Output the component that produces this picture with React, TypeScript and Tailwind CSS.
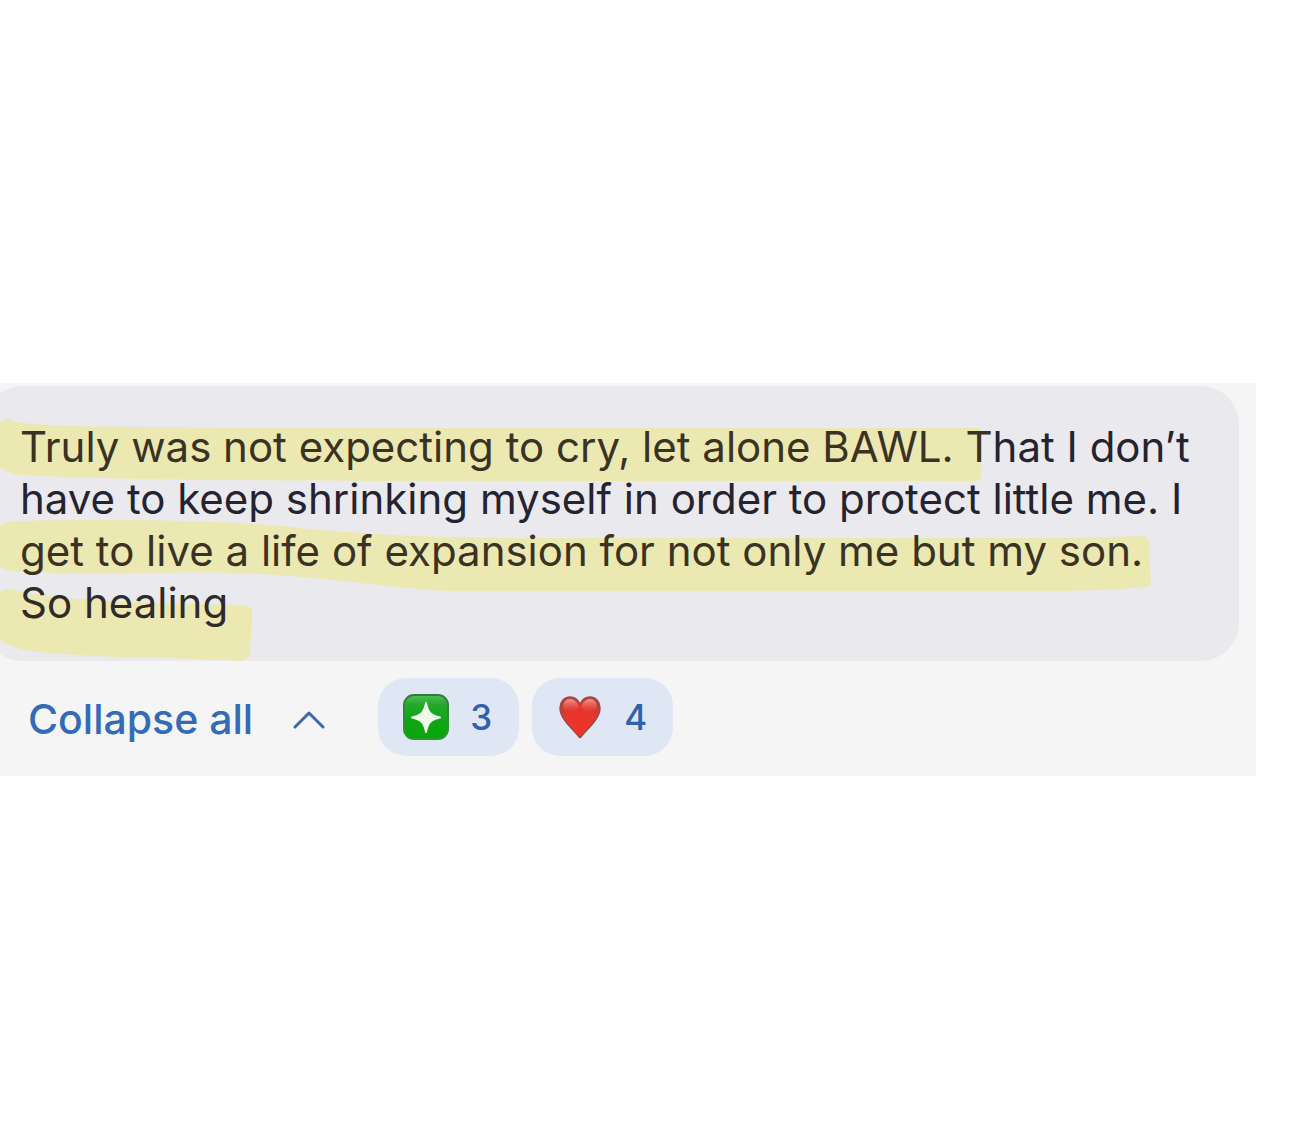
import { useState, type ReactNode } from "react";

function Highlights() {
  return (
    <svg
      className="pointer-events-none absolute left-0 top-0"
      width="1256"
      height="278"
      viewBox="0 0 1256 278"
      fill="#ece8b2"
      aria-hidden="true"
    >
      <path d="M0 37 Q6 30 16 36 C60 42 130 40 230 42 L700 42 L978 42 Q982 42 982 48 L981 91 Q981 95 975 95 L380 95 C240 94 110 94 20 89 Q6 87 0 81 Z" />
      <path d="M0 140 Q5 135 20 135 C110 133 230 134 300 142 C390 151 470 152 560 152 L1010 152 Q1090 152 1142 150 Q1148 150 1149 157 L1151 196 Q1151 201 1144 201 Q1105 205 1050 205 L450 205 C390 203 330 190 235 187 C170 185 70 190 10 185 Q3 184 0 180 Z" />
      <path d="M0 206 Q5 202 14 204 C60 215 140 216 190 218 L244 219 Q252 219 252 228 L250 268 Q249 275 240 275 C190 271 80 273 25 264 Q6 260 0 253 Z" />
    </svg>
  );
}

function StarEmoji() {
  return (
    <svg width="48" height="48" viewBox="0 0 48 48" aria-hidden="true">
      <defs>
        <linearGradient id="star-tile" x1="0" y1="0" x2="0" y2="1">
          <stop offset="0" stopColor="#4cc052" />
          <stop offset="0.22" stopColor="#25a82b" />
          <stop offset="0.6" stopColor="#0fa512" />
          <stop offset="1" stopColor="#08a50a" />
        </linearGradient>
        <linearGradient id="star-edge" x1="0" y1="0" x2="0" y2="1">
          <stop offset="0" stopColor="#357c3a" />
          <stop offset="1" stopColor="#2a9a2d" />
        </linearGradient>
      </defs>
      <rect x="2" y="2" width="44" height="44" rx="10" fill="url(#star-tile)" stroke="url(#star-edge)" strokeWidth="2" />
      <path d="M24 10 C25.5 19 28.500 22.500 38 24.500 C28.500 26.500 25.500 30 24 39 C22.500 30 19.500 26.500 10 24.500 C19.500 22.500 22.500 19 24 10Z" fill="#eefbea" stroke="#eefbea" strokeWidth="2" strokeLinejoin="round" />
    </svg>
  );
}

function HeartEmoji() {
  return (
    <svg width="48" height="48" viewBox="0 0 48 48" aria-hidden="true">
      <defs>
        <radialGradient id="heart-fill" cx="0.5" cy="0.62" r="0.65">
          <stop offset="0" stopColor="#ee3327" />
          <stop offset="0.55" stopColor="#e6362d" />
          <stop offset="1" stopColor="#bd3f3c" />
        </radialGradient>
        <linearGradient id="heart-shine" x1="0" y1="0" x2="0" y2="1">
          <stop offset="0" stopColor="#ffb0a8" stopOpacity="0.8" />
          <stop offset="1" stopColor="#ff6a60" stopOpacity="0" />
        </linearGradient>
      </defs>
      <path d="M24 11 C26 7 30 4 34 4 C40 4 44 9 44 15 C44 26 31 36 25 44 Q24 45 23 44 C17 36 4 26 4 15 C4 9 8 4 14 4 C18 4 22 7 24 11Z" fill="url(#heart-fill)" stroke="#a04a48" strokeWidth="1.500" />
      <path d="M7 14 C7 9 10 6 14 6 C18 6 21 9 23 14 C19 19 10 21 7 14Z" fill="url(#heart-shine)" />
      <path d="M25 14 C27 9 30 6 34 6 C38 6 41 9 41 14 C38 21 29 19 25 14Z" fill="url(#heart-shine)" />
    </svg>
  );
}

function Reaction({ label, count, children }: { label: string; count: number; children: ReactNode }) {
  return (
    <button
      type="button"
      aria-label={`${label} ${count}`}
      className="flex h-[78px] w-[141px] items-center gap-5 rounded-[28px] bg-[#e0e7f4] pl-6 text-[35px] font-medium text-[#2f62ad]"
    >
      {children}
      <span>{count}</span>
    </button>
  );
}

export default function App() {
  const [open, setOpen] = useState(true);
  return (
    <main className="min-h-screen bg-white pt-[383px] font-['Inter',sans-serif]">
      <section className="mr-[33px] overflow-hidden bg-[#f5f5f6] pb-5 pt-[3px]">
        <article className="relative -ml-4 mr-[17px] rounded-[38px] bg-[#eae9ee] pb-8 pl-4 pt-[35px]">
          <div className="absolute left-4 top-0">
            <Highlights />
          </div>
          <p className="relative whitespace-nowrap pl-5 text-[42px] leading-[52px] text-[#25232f]">
            <span className="text-[#3a3223]">Truly was not expecting to cry, let alone BAWL. T</span>
            hat I don’t
            <br />
            have to keep shrinking myself in order to protect little me. I
            <br />
            <span className="text-[#3a3223]">get to live a life of expansion for not only me but my son.</span>
            <br />
            <span className="text-[#302a29]">So healing</span>
          </p>
        </article>
        <div className="flex items-center pl-7 pt-[17px]">
          <button
            type="button"
            aria-expanded={open}
            onClick={() => setOpen(!open)}
            className="flex items-center gap-10 pt-1 text-[41px] font-medium leading-[52px] text-[#336bb9]"
          >
            <span>Collapse all</span>
            <svg width="32" height="20" viewBox="0 0 32 20" fill="none" stroke="#3c6aad" strokeWidth="3" strokeLinecap="round" strokeLinejoin="round" aria-hidden="true">
              <path d="M2 18 L16 4 L30 18" />
            </svg>
          </button>
          <div className="ml-[53px] flex gap-[13px]">
            <Reaction label="Sparkle" count={3}>
              <StarEmoji />
            </Reaction>
            <Reaction label="Heart" count={4}>
              <HeartEmoji />
            </Reaction>
          </div>
        </div>
      </section>
    </main>
  );
}
